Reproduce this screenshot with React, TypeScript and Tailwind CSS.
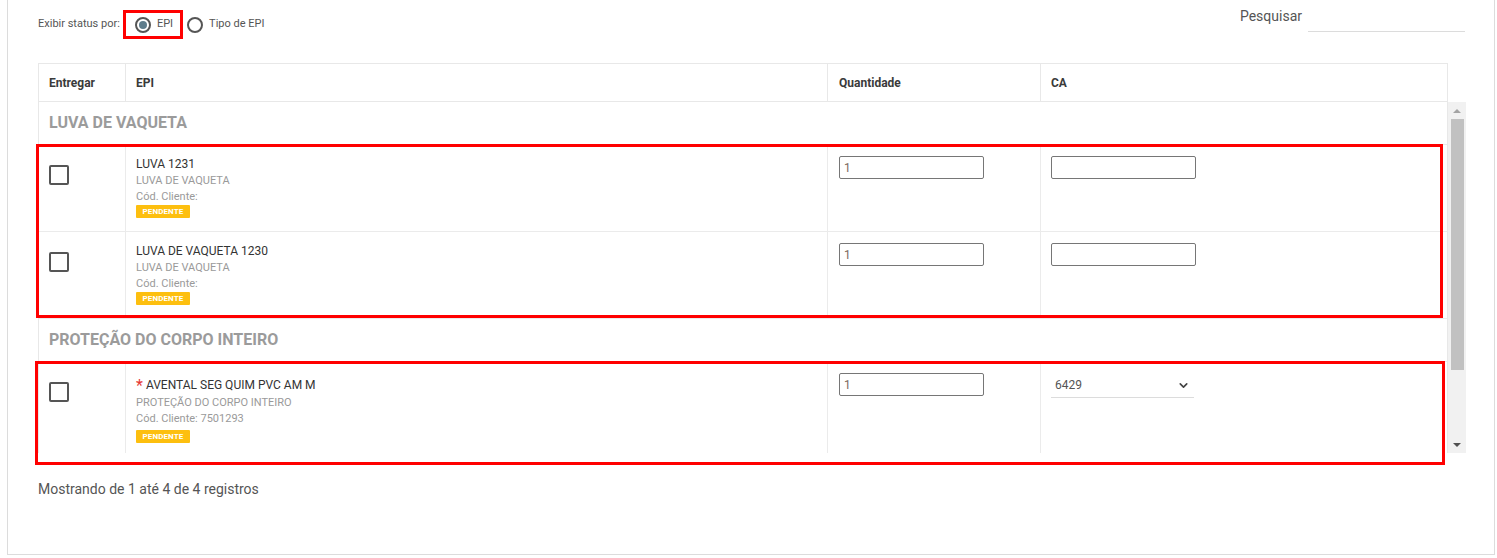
import React from "react";
import { ChevronDown } from "lucide-react";

const cols = "grid grid-cols-[86px_702px_213px_407px]";

function Checkbox() {
  return <div className="w-[20px] h-[20px] border-2 border-[#555] rounded-[2px] bg-white" />;
}

function Badge() {
  return (
    <div className="flex items-center justify-center w-[54px] h-[13px] bg-[#fdbf0f] rounded-[1px] text-white font-bold text-[8px] leading-none tracking-[0.1px]">
      PENDENTE
    </div>
  );
}

function TextInput({ value }: { value?: string }) {
  return (
    <div className="w-[145px] h-[23px] border border-[#767676] rounded-[2px] flex items-center pl-[4px] text-[12px] text-[#7d6a5e]">
      {value}
    </div>
  );
}

function ItemRow({
  name,
  group,
  code,
  star,
  select,
  last,
}: {
  name: string;
  group: string;
  code: string;
  star?: boolean;
  select?: boolean;
  last?: boolean;
}) {
  return (
    <div className={`${cols} ${last ? "h-[110px]" : "h-[87px] border-b border-[#ebebeb]"}`}>
      <div className="pl-[10px] pt-[20px]">
        <Checkbox />
      </div>
      <div className={`border-l border-[#ebebeb] pl-[10px] ${star ? "pt-[13px]" : "pt-[11px]"}`}>
        <div className={`flex items-center text-[12px] text-[#333] ${star ? "leading-[20px]" : "leading-[17px]"}`}>
          {star && <span className="text-[#e53935] text-[16px] leading-[16px] mr-[3px] mt-[2px]">*</span>}
          {name}
        </div>
        <div className="text-[11px] leading-[16px] text-[#9a9a9a]">{group}</div>
        <div className="text-[11px] leading-[16px] text-[#9a9a9a]">{code}</div>
        <div className={`flex ${star ? "mt-[3px]" : "mt-[0px]"}`}>
          <Badge />
        </div>
      </div>
      <div className="border-l border-[#ebebeb] pl-[11px] pt-[11px]">
        <TextInput value="1" />
      </div>
      <div className="border-l border-[#ebebeb] pl-[10px] pt-[11px]">
        {select ? (
          <div className="w-[143px] h-[25px] border-b border-[#dcdcdc] flex items-center justify-between pl-[4px] pr-[4px] text-[12px] text-[#555]">
            <span>6429</span>
            <ChevronDown size={13} strokeWidth={3} className="text-[#444]" />
          </div>
        ) : (
          <TextInput />
        )}
      </div>
    </div>
  );
}

function GroupRow({ title }: { title: string }) {
  return (
    <div className="h-[43px] border-b border-[#ebebeb] flex items-center pl-[10px] text-[16px] font-bold text-[#9b9b9b]">
      {title}
    </div>
  );
}

function Radio({ checked }: { checked?: boolean }) {
  return (
    <div className="w-[16px] h-[16px] rounded-full border-2 border-[#555] flex items-center justify-center bg-white">
      {checked && <div className="w-[8px] h-[8px] rounded-full bg-[#5e7c8b]" />}
    </div>
  );
}

export default function App() {
  return (
    <div className="min-h-[558px] bg-white font-['Roboto',sans-serif]">
      <div className="ml-[7px] w-[1488px] h-[555px] border-x border-b border-[#dcdcdc] pl-[30px] pr-[29px]">
        <div className="h-[63px] flex justify-between items-start">
          <div className="flex items-center pt-[10px] text-[11px] text-[#555]">
            <span className="mr-[3px]">Exibir status por:</span>
            <div className="flex items-center h-[29px] border-[3px] border-[#f00] pl-[9px] pr-[7px]">
              <Radio checked />
              <span className="ml-[6px]">EPI</span>
            </div>
            <div className="flex items-center ml-[4px]">
              <Radio />
              <span className="ml-[6px]">Tipo de EPI</span>
            </div>
          </div>
          <div className="flex items-start">
            <span className="text-[14px] leading-[20px] mt-[6px] text-[#555]">Pesquisar</span>
            <div className="ml-[6px] w-[157px] h-[32px] border-b border-[#dcdcdc]" />
          </div>
        </div>

        <div className="relative w-[1428px]">
          <div className={`${cols} w-[1410px] h-[39px] border border-[#e8e8e8] text-[12px] font-bold text-[#3a3a3a]`}>
            <div className="flex items-center pl-[10px]">Entregar</div>
            <div className="flex items-center pl-[10px] border-l border-[#e8e8e8]">EPI</div>
            <div className="flex items-center pl-[11px] border-l border-[#e8e8e8]">Quantidade</div>
            <div className="flex items-center pl-[10px] border-l border-[#e8e8e8]">CA</div>
          </div>
          <div className="flex h-[351px]">
            <div className="w-[1410px] overflow-hidden border-x border-[#e8e8e8]">
              <GroupRow title="LUVA DE VAQUETA" />
              <ItemRow name="LUVA 1231" group="LUVA DE VAQUETA" code="Cód. Cliente:" />
              <ItemRow name="LUVA DE VAQUETA 1230" group="LUVA DE VAQUETA" code="Cód. Cliente:" />
              <GroupRow title="PROTEÇÃO DO CORPO INTEIRO" />
              <ItemRow
                name="AVENTAL SEG QUIM PVC AM M"
                group="PROTEÇÃO DO CORPO INTEIRO"
                code="Cód. Cliente: 7501293"
                star
                select
                last
              />
            </div>
            <div className="w-[18px] bg-[#f1f1f1] flex flex-col items-center">
              <div className="h-[17px] flex items-center justify-center">
                <div className="w-0 h-0 border-x-[4px] border-x-transparent border-b-[4px] border-b-[#a3a3a3]" />
              </div>
              <div className="w-[13px] h-[251px] bg-[#c1c1c1]" />
              <div className="flex-1" />
              <div className="h-[17px] flex items-center justify-center">
                <div className="w-0 h-0 border-x-[4px] border-x-transparent border-t-[4px] border-t-[#505050]" />
              </div>
            </div>
          </div>

          <div className="absolute left-[-2px] top-[81px] w-[1407px] h-[174px] border-[3px] border-[#f00] pointer-events-none" />
          <div className="absolute left-[-3px] top-[298px] w-[1410px] h-[104px] border-[3px] border-[#f00] pointer-events-none" />
        </div>

        <div className="mt-[26px] text-[14px] leading-[20px] text-[#555]">Mostrando de 1 até 4 de 4 registros</div>
      </div>
    </div>
  );
}
